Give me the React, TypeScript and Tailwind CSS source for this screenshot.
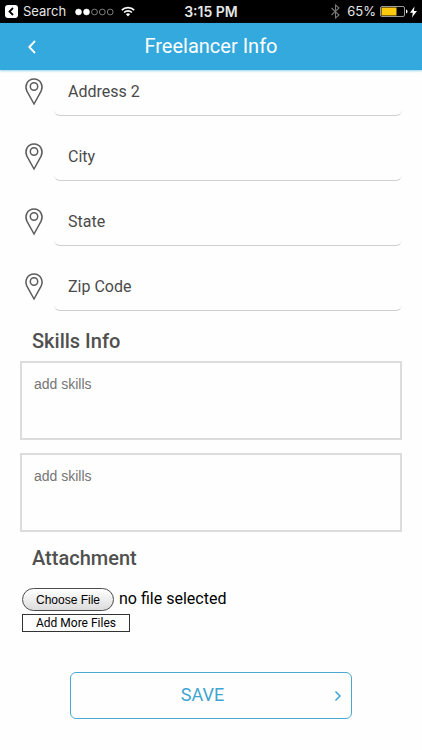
import { useRef, useState } from "react";

const addressFields = [
  { id: "address2", label: "Address 2" },
  { id: "city", label: "City" },
  { id: "state", label: "State" },
  { id: "zip", label: "Zip Code" },
];

export default function App() {
  const [skills, setSkills] = useState(["", ""]);
  const [fileName, setFileName] = useState("");
  const fileInput = useRef<HTMLInputElement>(null);

  function updateSkill(index: number, value: string) {
    setSkills(skills.map((skill, i) => (i === index ? value : skill)));
  }

  return (
    <div className="min-h-screen bg-[#fefefe] font-['Roboto',sans-serif] text-[#4a4a4a]">
      <div className="sticky top-0 z-10">
        <StatusBar />
        <header className="grid h-[47px] grid-cols-[64px_1fr_64px] items-center bg-[#34a9dd] text-white shadow-[0_1px_2px_rgba(52,169,221,0.5)]">
          <button type="button" aria-label="Back" className="flex h-full items-center pl-7">
            <svg width="8" height="14" viewBox="0 0 8 14" fill="none" stroke="currentColor" strokeWidth="1.9">
              <path d="M7 1 1.3 7 7 13" />
            </svg>
          </button>
          <h1 className="pb-px text-center text-xl">Freelancer Info</h1>
        </header>
      </div>

      <form className="-mt-[2px] px-5 pb-6" onSubmit={(event) => event.preventDefault()}>
        <div className="grid gap-[17px]">
          {addressFields.map((field) => (
            <AddressField key={field.id} id={field.id} label={field.label} />
          ))}
        </div>

        <h2 className="mt-4 pl-3 text-xl font-medium text-[#505050]">Skills Info</h2>

        <div className="mt-[6px] grid gap-[13px]">
          {skills.map((skill, index) => (
            <textarea
              key={index}
              aria-label={`Skills ${index + 1}`}
              placeholder="add skills"
              value={skill}
              onChange={(event) => updateSkill(index, event.target.value)}
              className="block h-[79px] w-full resize-none border-2 border-[#dcdcdc] px-3 py-[11px] font-['Liberation_Sans',Arial,sans-serif] text-sm outline-none placeholder:text-[#757575]"
            />
          ))}
        </div>

        <h2 className="mt-3 pl-3 text-xl font-medium text-[#505050]">Attachment</h2>

        <div className="mt-4 flex items-center gap-[5px] pl-[2px]">
          <input
            ref={fileInput}
            type="file"
            aria-label="Attachment"
            className="hidden"
            onChange={(event) => setFileName(event.target.files?.[0]?.name ?? "")}
          />
          <button
            type="button"
            onClick={() => fileInput.current?.click()}
            className="h-[23px] rounded-full border border-[#4c4c4c] bg-linear-to-b from-white to-[#dcdcdc] px-[13px] font-['Liberation_Sans',Arial,sans-serif] text-xs leading-5 text-black"
          >
            Choose File
          </button>
          <span className="pb-[2px] text-base leading-5 text-black">{fileName || "no file selected"}</span>
        </div>

        <button type="button" className="mt-[3px] ml-[2px] block h-[18px] border border-[#333] px-[13px] text-xs leading-4 text-black">
          Add More Files
        </button>

        <button type="submit" className="mx-[50px] mt-10 flex h-[47px] w-[calc(100%-100px)] items-center rounded-md border border-[#4aa9d0] pr-[9px] text-[#3fa5d2]">
          <span className="flex-1 pb-px text-center text-lg">SAVE</span>
          <svg width="8" height="12" viewBox="0 0 8 12" fill="none" stroke="currentColor" strokeWidth="1.5">
            <path d="M1.5 1.5 6 6l-4.5 4.5" />
          </svg>
        </button>
      </form>
    </div>
  );
}

function AddressField({ id, label }: { id: string; label: string }) {
  return (
    <div className="flex items-center">
      <label htmlFor={id} aria-label={label} className="w-[34px] pl-1">
        <PinIcon />
      </label>
      <input
        id={id}
        type="text"
        placeholder={label}
        className="h-12 min-w-0 flex-1 rounded-md border-b border-[#cfcfcf] bg-[#fefefe] px-[14px] text-base outline-none placeholder:text-[#4a4a4a]"
      />
    </div>
  );
}

function PinIcon() {
  return (
    <svg width="20" height="28" viewBox="0 0 20 28" fill="none" stroke="#5c5c5c" strokeWidth="1.5">
      <path d="M10 26 2.900 13.200C.4 8.100 3.200 1 10 1s9.600 7.100 7.100 12.200Z" />
      <circle cx="10" cy="8.500" r="3.700" />
    </svg>
  );
}

function StatusBar() {
  return (
    <div className="grid h-[23px] grid-cols-[1fr_auto_1fr] items-center bg-black px-[5px] font-['Inter',sans-serif] text-[13px] text-[#e6e6e6]">
      <div className="flex items-center">
        <svg width="13" height="13" viewBox="0 0 13 13">
          <rect width="13" height="13" rx="3" fill="#fff" />
          <path d="M8 3 4.500 6.500 8 10" fill="none" stroke="#000" strokeWidth="1.8" />
        </svg>
        <span className="ml-[5px]">Search</span>
        <svg className="ml-[9px]" width="39" height="8" viewBox="0 0 39 8" stroke="#8a8a8a">
          <circle cx="3.5" cy="4" r="3" fill="#fff" stroke="#fff" strokeWidth="0.5" />
          <circle cx="11.5" cy="4" r="3" fill="#fff" stroke="#fff" strokeWidth="0.5" />
          <circle cx="19.5" cy="4" r="2.9" fill="none" strokeWidth="0.9" />
          <circle cx="27.3" cy="4" r="2.9" fill="none" strokeWidth="0.9" />
          <circle cx="35.2" cy="4" r="2.9" fill="none" strokeWidth="0.9" />
        </svg>
        <svg className="ml-[7px]" width="14" height="11" viewBox="0 0 14 11" fill="none" stroke="#fff" strokeWidth="1.7">
          <path d="M.8 4.100a8.800 8.800 0 0 1 12.400 0" />
          <path d="M3.100 6.500a5.500 5.500 0 0 1 7.800 0" />
          <path d="M7 10.500 4.900 8.300a3 3 0 0 1 4.200 0Z" fill="#fff" stroke="none" />
        </svg>
      </div>

      <span className="text-sm font-semibold">3:15 PM</span>

      <div className="flex items-center justify-end">
        <svg width="9" height="15" viewBox="0 0 9 15" fill="none" stroke="#777" strokeWidth="1.1">
          <path d="m.5 4 7.500 7-3.500 3V1L8 4 .5 11" />
        </svg>
        <span className="ml-[7px]">65%</span>
        <svg className="ml-1" width="28" height="11" viewBox="0 0 28 11">
          <rect x=".5" y=".5" width="24" height="10" rx="1.5" fill="none" stroke="#999" />
          <rect x="1.5" y="1.5" width="15" height="8" fill="#fdc90c" />
          <path d="M26 3.500c1 .3 1.500 1.100 1.500 2s-.5 1.700-1.500 2Z" fill="#fff" />
        </svg>
        <svg className="ml-[2px]" width="7" height="12" viewBox="0 0 7 12" fill="#fff">
          <path d="M4.500.5 0 6.800h2.800L2 11.500 7 4.900H3.900Z" />
        </svg>
      </div>
    </div>
  );
}
